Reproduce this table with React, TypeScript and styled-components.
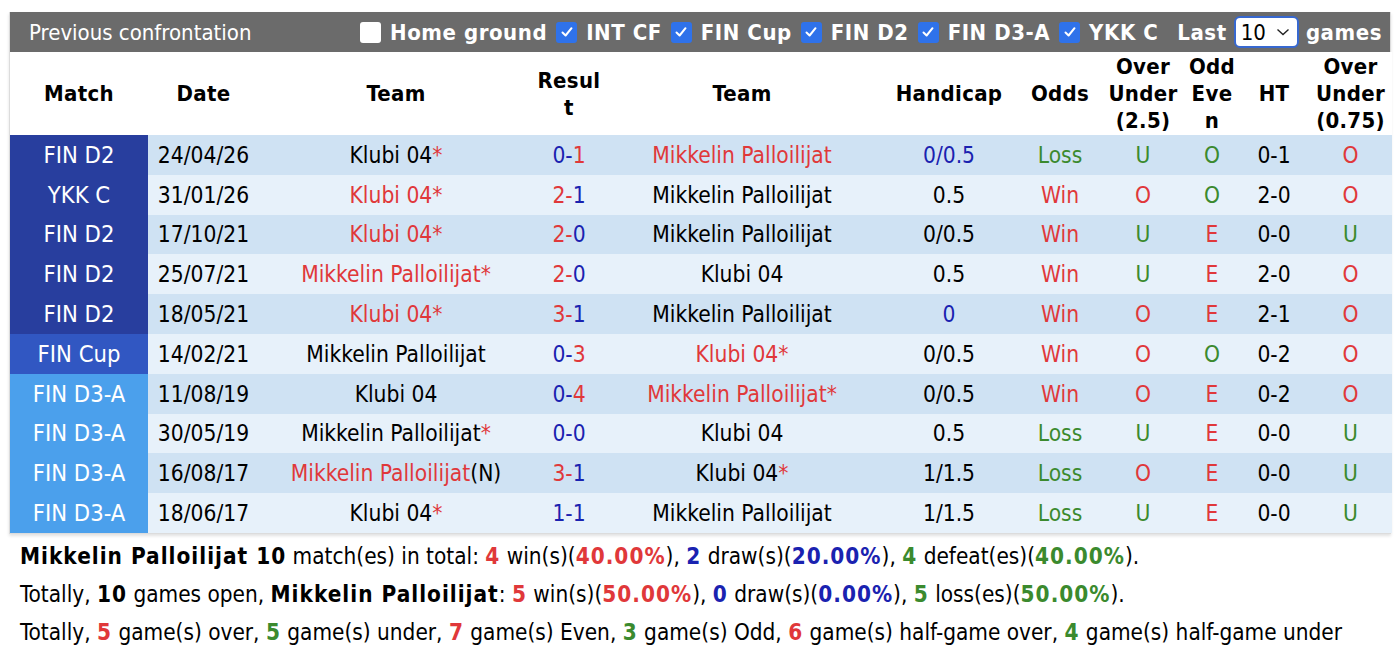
import React from "react";
import styled, { createGlobalStyle } from "styled-components";

const Global = createGlobalStyle`
  html, body { margin: 0; padding: 0; background: #fff; }
  body {
    font-family: "DejaVu Sans Condensed", "DejaVu Sans", sans-serif;
    font-stretch: condensed;
    font-size: 22px;
    color: #000;
  }
`;

const RED = "#e0383a";
const BLUE = "#1a22b0";
const GREEN = "#3b8a2e";

const Page = styled.div`
  padding: 12px 0 0 9px;
  width: 1382px;
`;

const Box = styled.div`
  border: 1px solid #dcdcdc;
  border-top: none;
  box-shadow: 0 2px 3px rgba(0, 0, 0, 0.12);
`;

const TitleBar = styled.div`
  height: 40px;
  background: #6b6b6b;
  color: #fff;
  display: flex;
  align-items: center;
  padding: 0 8px 0 19px;
  white-space: nowrap;
`;

const Title = styled.div`
  flex: 1;
`;

const Filters = styled.div`
  display: flex;
  align-items: center;
  gap: 9px;
  font-weight: bold;
  flex-shrink: 0;
`;

const Check = styled.span<{ $on?: boolean }>`
  flex-shrink: 0;
  width: 21px;
  height: 21px;
  border-radius: 3px;
  background: ${(p) => (p.$on ? "#2f72ea" : "#fff")};
  display: inline-flex;
  align-items: center;
  justify-content: center;
`;

const Label = styled.span<{ $gap?: number }>`
  letter-spacing: 0.55px;
  margin-left: ${(p) => p.$gap || 0}px;
`;

const Select = styled.span`
  flex-shrink: 0;
  display: inline-flex;
  align-items: center;
  gap: 10px;
  height: 28px;
  padding: 0 7px 0 5px;
  margin: 0 -2px 0 -2px;
  background: #fff;
  color: #000;
  font-weight: normal;
  border: 2px solid #3768d0;
  border-radius: 6px;
`;

const Table = styled.table`
  width: 100%;
  border-collapse: collapse;
  table-layout: fixed;
`;

const Th = styled.th`
  font-weight: bold;
  line-height: 27px;
  height: 83px;
  padding: 0;
  text-align: center;
  vertical-align: middle;
  background: #fff;
  letter-spacing: 0.3px;
`;

const Tr = styled.tr<{ $alt: boolean }>`
  background: ${(p) => (p.$alt ? "#e7f1fa" : "#cfe2f3")};
`;

const Td = styled.td`
  height: 39.8px;
  padding: 0;
  text-align: center;
  vertical-align: middle;
  white-space: nowrap;
  font-size: 22.6px;
`;

const MatchTd = styled(Td)<{ $bg: string }>`
  background: ${(p) => p.$bg};
  color: #fff;
  font-size: 23.6px;
`;

const C = styled.span<{ $c?: string; $b?: boolean }>`
  color: ${(p) => p.$c || "inherit"};
  font-weight: ${(p) => (p.$b ? "bold" : "inherit")};
  letter-spacing: ${(p) => (p.$b ? "1px" : "inherit")};
`;

const B = styled.b`
  letter-spacing: 1px;
`;

const Summary = styled.div`
  padding: 3px 0 0 11px;
  line-height: 38px;
  font-size: 22.4px;
`;

const Tick = () => (
  <svg width="14" height="14" viewBox="0 0 14 14">
    <path d="M2.5 7.5 L5.6 10.5 L11.5 3.2" stroke="#fff" strokeWidth="2" fill="none" strokeLinecap="round" strokeLinejoin="round" />
  </svg>
);

const Chevron = () => (
  <svg width="14" height="10" viewBox="0 0 14 10">
    <path d="M1.5 2.5 L7 7.5 L12.5 2.5" stroke="#222" strokeWidth="1.4" fill="none" />
  </svg>
);

type Team = { name: string; red?: boolean; star?: boolean; n?: boolean };
type Row = {
  m: string;
  d: string;
  h: Team;
  s: [number, number];
  a: Team;
  hc: string;
  hcBlue?: boolean;
  odds: "Win" | "Loss";
  ou: "O" | "U";
  oe: "O" | "E";
  ht: string;
  ou2: "O" | "U";
};

const K = "Klubi 04";
const M = "Mikkelin Palloilijat";

const rows: Row[] = [
  { m: "FIN D2", d: "24/04/26", h: { name: K, star: true }, s: [0, 1], a: { name: M, red: true }, hc: "0/0.5", hcBlue: true, odds: "Loss", ou: "U", oe: "O", ht: "0-1", ou2: "O" },
  { m: "YKK C", d: "31/01/26", h: { name: K, star: true, red: true }, s: [2, 1], a: { name: M }, hc: "0.5", odds: "Win", ou: "O", oe: "O", ht: "2-0", ou2: "O" },
  { m: "FIN D2", d: "17/10/21", h: { name: K, star: true, red: true }, s: [2, 0], a: { name: M }, hc: "0/0.5", odds: "Win", ou: "U", oe: "E", ht: "0-0", ou2: "U" },
  { m: "FIN D2", d: "25/07/21", h: { name: M, star: true, red: true }, s: [2, 0], a: { name: K }, hc: "0.5", odds: "Win", ou: "U", oe: "E", ht: "2-0", ou2: "O" },
  { m: "FIN D2", d: "18/05/21", h: { name: K, star: true, red: true }, s: [3, 1], a: { name: M }, hc: "0", hcBlue: true, odds: "Win", ou: "O", oe: "E", ht: "2-1", ou2: "O" },
  { m: "FIN Cup", d: "14/02/21", h: { name: M }, s: [0, 3], a: { name: K, star: true, red: true }, hc: "0/0.5", odds: "Win", ou: "O", oe: "O", ht: "0-2", ou2: "O" },
  { m: "FIN D3-A", d: "11/08/19", h: { name: K }, s: [0, 4], a: { name: M, star: true, red: true }, hc: "0/0.5", odds: "Win", ou: "O", oe: "E", ht: "0-2", ou2: "O" },
  { m: "FIN D3-A", d: "30/05/19", h: { name: M, star: true }, s: [0, 0], a: { name: K }, hc: "0.5", odds: "Loss", ou: "U", oe: "E", ht: "0-0", ou2: "U" },
  { m: "FIN D3-A", d: "16/08/17", h: { name: M, red: true, n: true }, s: [3, 1], a: { name: K, star: true }, hc: "1/1.5", odds: "Loss", ou: "O", oe: "E", ht: "0-0", ou2: "U" },
  { m: "FIN D3-A", d: "18/06/17", h: { name: K, star: true }, s: [1, 1], a: { name: M }, hc: "1/1.5", odds: "Loss", ou: "U", oe: "E", ht: "0-0", ou2: "U" },
];

const matchBg: Record<string, string> = {
  "FIN D2": "#283e9e",
  "YKK C": "#283e9e",
  "FIN Cup": "#3157c2",
  "FIN D3-A": "#4ba0ec",
};

const widths = [138, 111, 274, 72, 274, 140, 82, 84, 54, 70, 83];

const TeamCell = ({ t }: { t: Team }) => (
  <Td>
    <C $c={t.red ? RED : undefined}>{t.name}</C>
    {t.n && <C>(N)</C>}
    {t.star && <C $c={RED}>*</C>}
  </Td>
);

const Score = ({ s }: { s: [number, number] }) => {
  const [h, a] = s;
  const hc = h > a ? RED : BLUE;
  const ac = a > h ? RED : BLUE;
  return (
    <Td>
      <C $c={hc}>{h}-</C>
      <C $c={ac}>{a}</C>
    </Td>
  );
};

export default function App() {
  return (
    <>
      <Global />
      <Page>
        <Box>
          <TitleBar>
            <Title>Previous confrontation</Title>
            <Filters>
              <Check />
              <Label>Home ground</Label>
              <Check $on><Tick /></Check>
              <Label>INT CF</Label>
              <Check $on><Tick /></Check>
              <Label>FIN Cup</Label>
              <Check $on><Tick /></Check>
              <Label>FIN D2</Label>
              <Check $on><Tick /></Check>
              <Label>FIN D3-A</Label>
              <Check $on><Tick /></Check>
              <Label>YKK C</Label>
              <Label $gap={10}>Last</Label>
              <Select>10 <Chevron /></Select>
              <Label>games</Label>
            </Filters>
          </TitleBar>
          <Table>
            <colgroup>
              {widths.map((w, i) => (
                <col key={i} style={{ width: w }} />
              ))}
            </colgroup>
            <thead>
              <tr>
                <Th>Match</Th>
                <Th>Date</Th>
                <Th>Team</Th>
                <Th>Resul<br />t</Th>
                <Th>Team</Th>
                <Th>Handicap</Th>
                <Th>Odds</Th>
                <Th>Over<br />Under<br />(2.5)</Th>
                <Th>Odd<br />Eve<br />n</Th>
                <Th>HT</Th>
                <Th>Over<br />Under<br />(0.75)</Th>
              </tr>
            </thead>
            <tbody>
              {rows.map((r, i) => (
                <Tr key={i} $alt={i % 2 === 1}>
                  <MatchTd $bg={matchBg[r.m]}>{r.m}</MatchTd>
                  <Td>{r.d}</Td>
                  <TeamCell t={r.h} />
                  <Score s={r.s} />
                  <TeamCell t={r.a} />
                  <Td><C $c={r.hcBlue ? BLUE : undefined}>{r.hc}</C></Td>
                  <Td><C $c={r.odds === "Win" ? RED : GREEN}>{r.odds}</C></Td>
                  <Td><C $c={r.ou === "O" ? RED : GREEN}>{r.ou}</C></Td>
                  <Td><C $c={r.oe === "O" ? GREEN : RED}>{r.oe}</C></Td>
                  <Td>{r.ht}</Td>
                  <Td><C $c={r.ou2 === "O" ? RED : GREEN}>{r.ou2}</C></Td>
                </Tr>
              ))}
            </tbody>
          </Table>
        </Box>
        <Summary>
          <div>
            <B>Mikkelin Palloilijat 10</B> match(es) in total: <C $c={RED} $b>4</C> win(s)(<C $c={RED} $b>40.00%</C>), <C $c={BLUE} $b>2</C> draw(s)(<C $c={BLUE} $b>20.00%</C>), <C $c={GREEN} $b>4</C> defeat(es)(<C $c={GREEN} $b>40.00%</C>).
          </div>
          <div>
            Totally, <B>10</B> games open, <B>Mikkelin Palloilijat</B>: <C $c={RED} $b>5</C> win(s)(<C $c={RED} $b>50.00%</C>), <C $c={BLUE} $b>0</C> draw(s)(<C $c={BLUE} $b>0.00%</C>), <C $c={GREEN} $b>5</C> loss(es)(<C $c={GREEN} $b>50.00%</C>).
          </div>
          <div>
            Totally, <C $c={RED} $b>5</C> game(s) over, <C $c={GREEN} $b>5</C> game(s) under, <C $c={RED} $b>7</C> game(s) Even, <C $c={GREEN} $b>3</C> game(s) Odd, <C $c={RED} $b>6</C> game(s) half-game over, <C $c={GREEN} $b>4</C> game(s) half-game under
          </div>
        </Summary>
      </Page>
    </>
  );
}
